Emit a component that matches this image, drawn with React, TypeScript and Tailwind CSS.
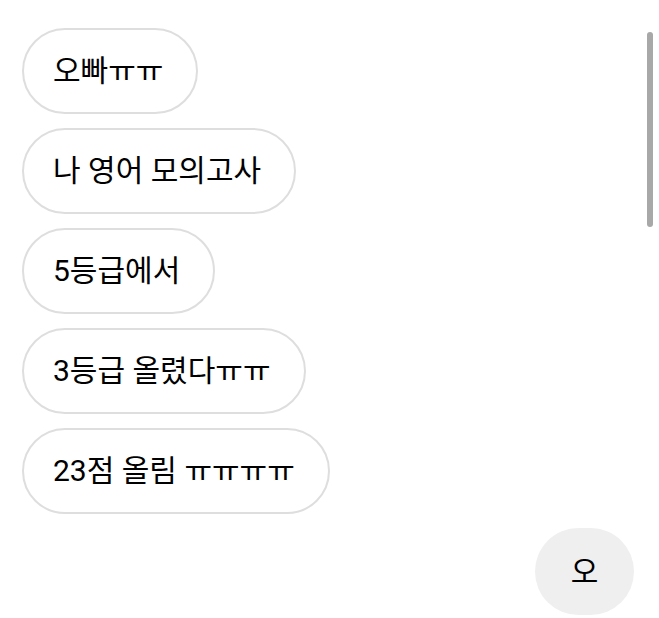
const messages = [
  "오빠ㅠㅠ",
  "나 영어 모의고사",
  "5등급에서",
  "3등급 올렸다ㅠㅠ",
  "23점 올림 ㅠㅠㅠㅠ",
];

const Bubble = ({ text }: { text: string }) => (
  <div className="flex h-[86px] w-fit items-center rounded-full border-2 border-[#dedede] bg-white pl-[29px] pr-[33px] text-[30px] leading-none text-black">
    {text}
  </div>
);

export default function App() {
  return (
    <div
      className="relative h-[618px] w-[659px] overflow-hidden bg-white"
      style={{ fontFamily: 'Roboto, "Noto Sans CJK KR", sans-serif' }}
    >
      <div className="flex flex-col gap-[14px] pl-[22px] pr-[25px] pt-[28px]">
        {messages.map((m) => (
          <Bubble key={m} text={m} />
        ))}
        <div className="self-end">
          <div className="flex h-[87px] w-[99px] items-center justify-center rounded-full bg-[#efefef] text-[30px] leading-none text-black">
            오
          </div>
        </div>
      </div>

      {/* overlay scrollbar */}
      <div className="absolute right-[6px] top-[32px] h-[195px] w-[6px] rounded-full bg-[#a8a8a8]" />
    </div>
  );
}
